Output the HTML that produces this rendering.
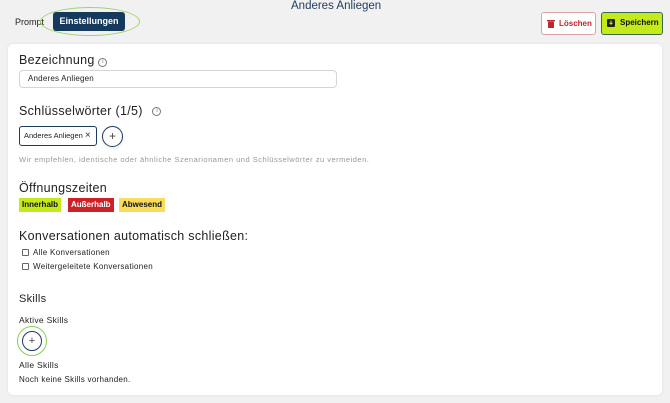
<!DOCTYPE html>
<html><head><meta charset="utf-8">
<style>
*{margin:0;padding:0;box-sizing:border-box}
body{width:670px;height:403px;background:#f1f1f2;font-family:"Liberation Sans",sans-serif;color:#1d1d1f;position:relative;overflow:hidden}
.a{position:absolute;white-space:nowrap}
.card{position:absolute;left:8px;top:44px;width:654px;height:351px;background:#fff;border-radius:5px;box-shadow:0 0 3px rgba(0,0,0,.08)}
.h{font-size:12.5px;color:#222;letter-spacing:.3px}
.s{font-size:8px;color:#222;letter-spacing:.3px}
.cb{display:inline-block;width:7px;height:7px;border:1px solid #666;border-radius:1px;vertical-align:-1px;margin-right:4px}
.badge{position:absolute;top:198px;height:14px;font-size:8px;font-weight:bold;line-height:14px;padding:0 3px}
</style></head><body>
<div class="a" style="left:291px;top:0;font-size:11.5px;color:#1e3b5c">Anderes Anliegen</div>
<div class="a" style="left:15px;top:17px;font-size:9px;color:#222">Prompt</div>
<div class="a" style="left:53px;top:12px;width:72px;height:19px;background:#153a5b;border-radius:3px;color:#fff;font-size:9px;font-weight:bold;line-height:19px;text-align:center">Einstellungen</div>
<div class="a" style="left:40px;top:7px;width:100px;height:29px;border:1.5px solid #9fd46a;border-radius:50%"></div>
<div class="a" style="left:541px;top:12px;width:55px;height:23px;border:1px solid #d9a5a5;border-radius:3px;background:#fff;font-size:8px;font-weight:bold;color:#c0262d;line-height:21px;padding-left:17px">Löschen
<svg style="position:absolute;left:5px;top:6px" width="8" height="9" viewBox="0 0 8 9"><rect x="0" y="1" width="8" height="1.4" fill="#c0262d"/><rect x="1" y="2.6" width="6" height="6.4" rx=".5" fill="#c0262d"/></svg></div>
<div class="a" style="left:601px;top:12px;width:62px;height:23px;border:1.5px solid #3c6a4a;border-radius:3px;background:#c4ea1a;font-size:8px;font-weight:bold;color:#111;line-height:20px;padding-left:18px">Speichern
<svg style="position:absolute;left:5px;top:5.5px" width="8" height="8" viewBox="0 0 8 8"><rect width="8" height="8" rx="1" fill="#222"/><path d="M4 1.5v3.5M2.5 3.8L4 5.2 5.5 3.8" stroke="#c4ea1a" stroke-width="1" fill="none"/></svg></div>
<div class="card"></div>
<div class="a h" style="left:19px;top:53px">Bezeichnung <span style="display:inline-block;width:9px;height:9px;border:1px solid #777;border-radius:50%;font-size:6px;text-align:center;line-height:7px;color:#777;vertical-align:1px;letter-spacing:0">i</span></div>
<div class="a" style="left:19px;top:70px;width:318px;height:18px;border:1px solid #d5d5d5;border-radius:4px;font-size:8px;line-height:16px;padding-left:8px;letter-spacing:.2px">Anderes Anliegen</div>
<div class="a h" style="left:19px;top:104px">Schlüsselwörter (1/5) <span style="margin-left:6px;display:inline-block;width:9px;height:9px;border:1px solid #777;border-radius:50%;font-size:6px;text-align:center;line-height:7px;color:#777;vertical-align:3px;letter-spacing:0">i</span></div>
<div class="a" style="left:19px;top:126px;width:78px;height:20px;border:1.5px solid #1e3b5c;border-radius:3px;font-size:7.5px;line-height:17px;padding-left:4px">Anderes Anliegen <span style="font-size:10px;color:#333">×</span></div>
<div class="a" style="left:102px;top:126px;width:21px;height:21px;border:1px solid #1e3b5c;border-radius:50%;font-size:12px;line-height:18px;text-align:center;color:#444;box-shadow:0 1px 3px rgba(0,0,0,.1)">+</div>
<div class="a" style="left:19px;top:155px;font-size:7.5px;color:#999;letter-spacing:.5px">Wir empfehlen, identische oder ähnliche Szenarionamen und Schlüsselwörter zu vermeiden.</div>
<div class="a h" style="left:19px;top:181px">Öffnungszeiten</div>
<div class="badge" style="left:19px;background:#c4ea1a;color:#111">Innerhalb</div>
<div class="badge" style="left:68px;background:#cc2127;color:#fff">Außerhalb</div>
<div class="badge" style="left:119px;background:#f9dc5c;color:#111">Abwesend</div>
<div class="a h" style="left:19px;top:229px">Konversationen automatisch schließen:</div>
<div class="a s" style="left:22px;top:248px"><span class="cb"></span>Alle Konversationen</div>
<div class="a s" style="left:22px;top:262px"><span class="cb"></span>Weitergeleitete Konversationen</div>
<div class="a h" style="left:19px;top:293px;font-size:11px">Skills</div>
<div class="a" style="left:19px;top:315px;font-size:8.5px;letter-spacing:.3px">Aktive Skills</div>
<div class="a" style="left:17px;top:326px;width:30px;height:30px;border:1.5px solid #8cc95a;border-radius:50%"></div>
<div class="a" style="left:22px;top:331px;width:20px;height:20px;border:1px solid #1e3b5c;border-radius:50%;font-size:11px;line-height:18px;text-align:center;color:#444">+</div>
<div class="a" style="left:19px;top:360px;font-size:8.5px;letter-spacing:.3px">Alle Skills</div>
<div class="a" style="left:19px;top:375px;font-size:8px;letter-spacing:.3px">Noch keine Skills vorhanden.</div>
</body></html>
